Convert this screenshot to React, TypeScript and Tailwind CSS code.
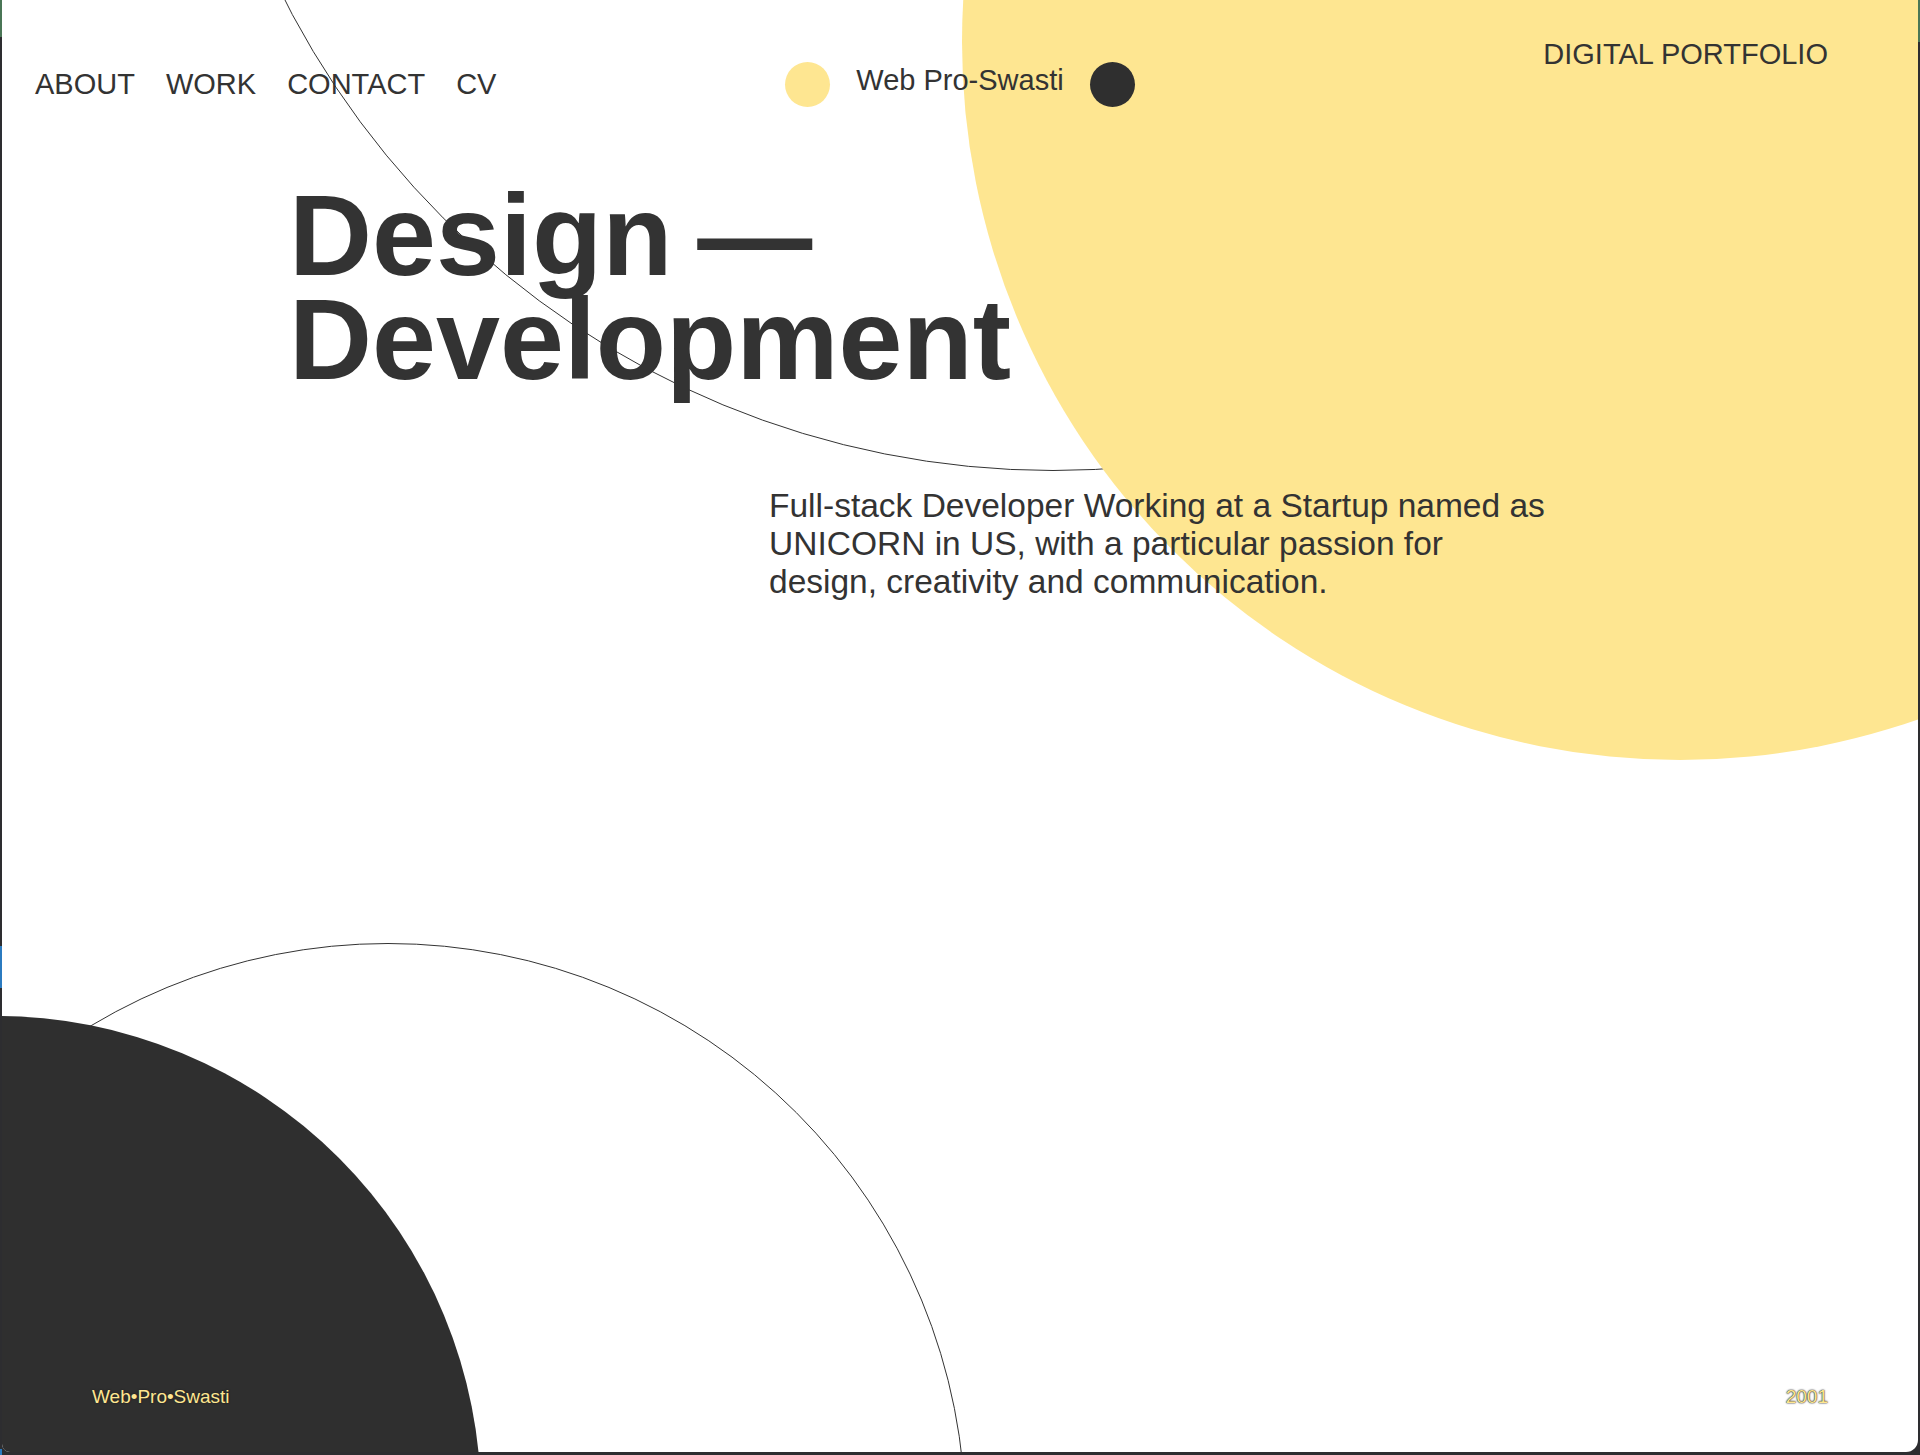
import React from 'react';

const navLinks = ['ABOUT', 'WORK', 'CONTACT', 'CV'];

const App: React.FC = () => {
  return (
    <div className="flex w-[1920px] h-[1455px] bg-[#2d2d30] overflow-hidden [font-family:'Liberation_Sans',Arial,sans-serif] text-[#333]">
      {/* window frame, left edge */}
      <div className="flex flex-col w-[2px] shrink-0">
        <div className="h-[37px] bg-[#4a7656]" />
        <div className="h-[909px] bg-[#2d2d30]" />
        <div className="h-[42px] bg-[#2b7bc0]" />
        <div className="flex-1 bg-[#2d2d30]" />
        <div className="h-[6px] bg-[#2b7bc0]" />
      </div>

      <div className="relative flex flex-col w-[1916px] h-[1452px] bg-white rounded-bl-[8px] rounded-br-[12px] overflow-hidden">
        {/* background shapes */}
        <div className="absolute left-[188px] top-[-1255px] w-[1726px] h-[1726px] rounded-full border border-[#333]" />
        <div className="absolute left-[960px] top-[-676px] w-[1436px] h-[1436px] rounded-full bg-[#fee691]" />
        <div className="absolute left-[-192px] top-[943px] w-[1156px] h-[1156px] rounded-full border border-[#333]" />
        <div className="absolute left-[-491px] top-[1016px] w-[970px] h-[970px] rounded-full bg-[#2f2f2f]" />

        <header className="relative grid grid-cols-3 items-start pt-[37px]">
          <nav className="flex gap-[31px] pl-[33px] mt-[31px] text-[29px]">
            {navLinks.map((link) => (
              <a key={link} href="#" className="leading-[1.15]">
                {link}
              </a>
            ))}
          </nav>
          <div className="flex justify-center items-start gap-[26px] mt-[25px]">
            <span className="w-[45px] h-[45px] rounded-full bg-[#fee691]" />
            <span className="mt-[2px] text-[29px] leading-[1.15]">Web Pro-Swasti</span>
            <span className="w-[45px] h-[45px] rounded-full bg-[#2f2f2f]" />
          </div>
          <div className="mt-[1px] text-right pr-[90px] text-[29px] leading-[1.15]">DIGITAL PORTFOLIO</div>
        </header>

        <h1 className="relative mt-[77px] pl-[287px] text-[115px] leading-[0.9] font-bold [word-spacing:-7px]">
          Design —<br />
          Development
        </h1>

        <p className="relative mt-[96px] ml-[767px] w-[782px] text-[33.5px] leading-[38px]">
          Full-stack Developer Working at a Startup named as UNICORN in US, with a particular passion for design, creativity and communication.
        </p>

        <footer className="relative mt-auto flex justify-between pl-[90px] pr-[90px] pb-[44px] text-[19px] leading-[22px] text-[#fee691] [text-shadow:0_0_2px_#222,0_0_1px_#222]">
          <span>Web•Pro•Swasti</span>
          <span>2001</span>
        </footer>
      </div>

      {/* window frame, right edge */}
      <div className="flex flex-col w-[2px] shrink-0">
        <div className="h-[42px] bg-[#4a7656]" />
        <div className="flex-1 bg-[#2d2d30]" />
      </div>
    </div>
  );
};

export default App;
